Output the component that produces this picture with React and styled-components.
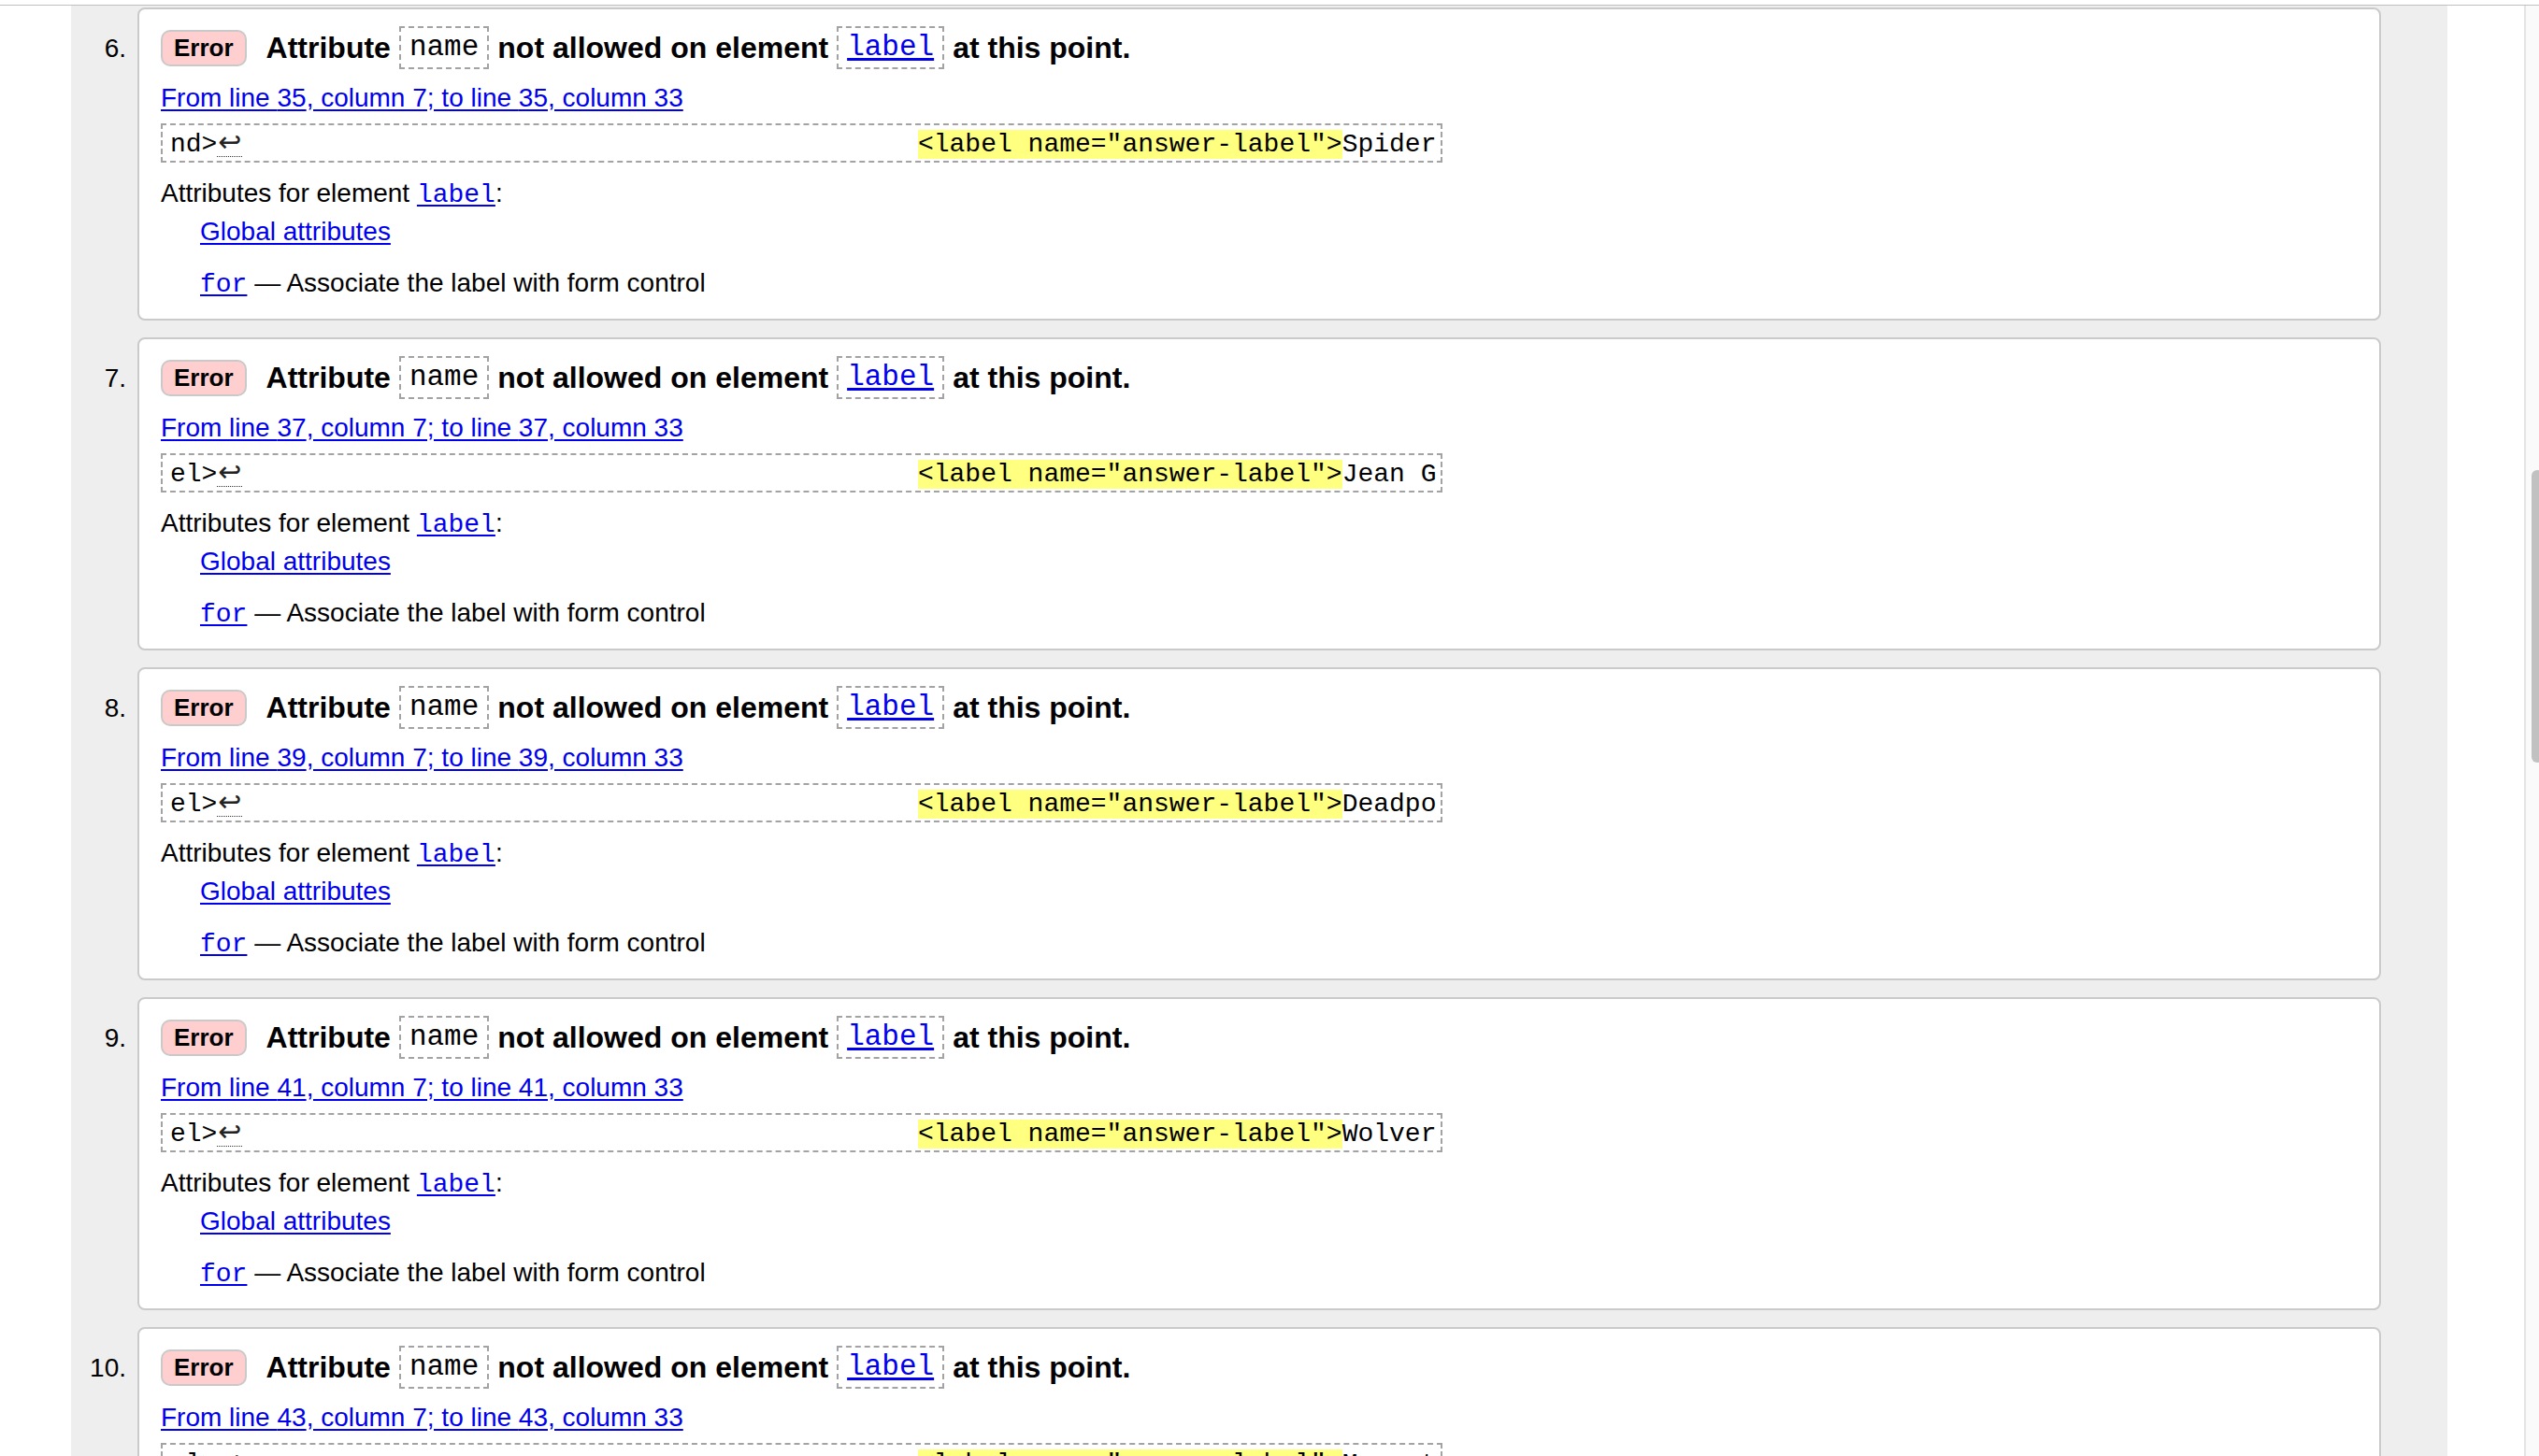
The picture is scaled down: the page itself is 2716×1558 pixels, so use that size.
import React from 'react';
import styled, { createGlobalStyle } from 'styled-components';

const GlobalStyle = createGlobalStyle`
  html, body {
    margin: 0;
    padding: 0;
    background: #ffffff;
  }
  body {
    font-family: "Liberation Sans", Arial, Helvetica, sans-serif;
    color: #000;
    overflow: hidden;
  }
`;

const MONO = `"Liberation Mono", "DejaVu Sans Mono", monospace`;
const LINK = '#0000ee';

const Frame = styled.div`
  height: 100vh;
  display: flex;
  flex-direction: column;
  padding-top: 5px;
  box-sizing: border-box;
  overflow: hidden;
`;

const TopRule = styled.div`
  flex: none;
  height: 1px;
  background: #c0c0c0;
`;

const Body = styled.div`
  flex: 1;
  min-height: 0;
  display: flex;
`;

const Gutter = styled.div`
  flex: none;
  width: 76px;
`;

const Results = styled.ol`
  flex: none;
  width: 2542px;
  margin: 0;
  padding: 2px 71px 0 0;
  box-sizing: border-box;
  list-style: none;
  background: #eeeeee;
  overflow: hidden;
`;

const Margin = styled.div`
  flex: 1;
`;

const Track = styled.div`
  position: relative;
  flex: none;
  width: 14px;
  border-left: 2px solid #e4e4e4;
  background: #fafafa;
`;

const Thumb = styled.div`
  position: absolute;
  top: 497px;
  left: 6px;
  width: 12px;
  height: 313px;
  border-radius: 6px;
  background: #c1c1c1;
`;

const Item = styled.li`
  display: grid;
  grid-template-columns: 71px 1fr;
  margin-bottom: 18px;
`;

const Num = styled.div`
  padding: 28px 12px 0 0;
  text-align: right;
  font-size: 28px;
  line-height: 32px;
`;

const Card = styled.div`
  background: #fff;
  border: 2px solid #cacaca;
  border-radius: 8px;
  padding: 18px 23px 22px;
`;

const Heading = styled.p`
  margin: 0;
  height: 46px;
  display: flex;
  align-items: center;
  gap: 9px;
  font-size: 32px;
  font-weight: bold;
  white-space: nowrap;
`;

const Badge = styled.span`
  margin-right: 12px;
  padding: 2px 12px;
  font-size: 26px;
  line-height: 31px;
  background: #ffcfcf;
  border: 2px solid #c9c9c9;
  border-radius: 10px;
`;

const HeadCode = styled.code`
  padding: 3px 9px;
  font-family: ${MONO};
  font-size: 31px;
  font-weight: normal;
  line-height: 36px;
  border: 2px dashed #a3a3a3;
  color: ${({ $link }) => ($link ? LINK : '#000')};
  text-decoration: ${({ $link }) => ($link ? 'underline' : 'none')};
  text-underline-offset: 3px;
`;

const Location = styled.a`
  display: block;
  width: fit-content;
  margin-top: 15px;
  font-size: 28px;
  line-height: 32px;
  color: ${LINK};
  text-decoration: underline;
  text-underline-offset: 3px;
`;

const Extract = styled.code`
  display: block;
  width: fit-content;
  margin-top: 11px;
  padding: 5px 5px 1px 8px;
  font-family: ${MONO};
  font-size: 28px;
  line-height: 32px;
  white-space: pre;
  border: 2px dashed #a3a3a3;
`;

const Return = styled.span`
  display: inline-block;
  width: 27px;
  padding-bottom: 3px;
  line-height: 24px;
  text-align: center;
  font-family: "DejaVu Sans", sans-serif;
  font-size: 30px;
  color: #222;
  border-bottom: 1px dotted #333;
`;

const Mark = styled.b`
  font-weight: normal;
  background: #ffff80;
`;

const Defs = styled.dl`
  margin: 17px 0 0;
  font-size: 28px;
  line-height: 32px;
`;

const Term = styled.dt`
  margin: 0;
`;

const Def = styled.dd`
  margin: ${({ $gap }) => $gap}px 0 0 42px;
`;

const CodeLink = styled.a`
  font-family: ${MONO};
  font-size: 28px;
  line-height: 1;
  color: ${LINK};
  text-decoration: underline;
  text-underline-offset: 3px;
`;

const TextLink = styled.a`
  color: ${LINK};
  text-decoration: underline;
  text-underline-offset: 3px;
`;

const messages = [
  { n: 6, line: 35, head: 'nd>', tail: 'Spider' },
  { n: 7, line: 37, head: 'el>', tail: 'Jean G' },
  { n: 8, line: 39, head: 'el>', tail: 'Deadpo' },
  { n: 9, line: 41, head: 'el>', tail: 'Wolver' },
  { n: 10, line: 43, head: 'el>', tail: 'Magnet' },
];

const GAP = ' '.repeat(43);

function Message({ n, line, head, tail }) {
  return (
    <Item>
      <Num>{n}.</Num>
      <Card>
        <Heading>
          <Badge>Error</Badge>
          <span>Attribute</span>
          <HeadCode>name</HeadCode>
          <span>not allowed on element</span>
          <HeadCode $link>label</HeadCode>
          <span>at this point.</span>
        </Heading>
        <Location href="#">
          From line {line}, column 7; to line {line}, column 33
        </Location>
        <Extract>
          {head}
          <Return>↩</Return>
          {GAP}
          <Mark>{'<label name="answer-label">'}</Mark>
          {tail}
        </Extract>
        <Defs>
          <Term>
            Attributes for element <CodeLink href="#">label</CodeLink>:
          </Term>
          <Def $gap={9}>
            <TextLink href="#">Global attributes</TextLink>
          </Def>
          <Def $gap={23}>
            <CodeLink href="#">for</CodeLink> — Associate the label with form control
          </Def>
        </Defs>
      </Card>
    </Item>
  );
}

export default function App() {
  return (
    <>
      <GlobalStyle />
      <Frame>
        <TopRule />
        <Body>
          <Gutter />
          <Results>
            {messages.map((m) => (
              <Message key={m.n} {...m} />
            ))}
          </Results>
          <Margin />
          <Track>
            <Thumb />
          </Track>
        </Body>
      </Frame>
    </>
  );
}
